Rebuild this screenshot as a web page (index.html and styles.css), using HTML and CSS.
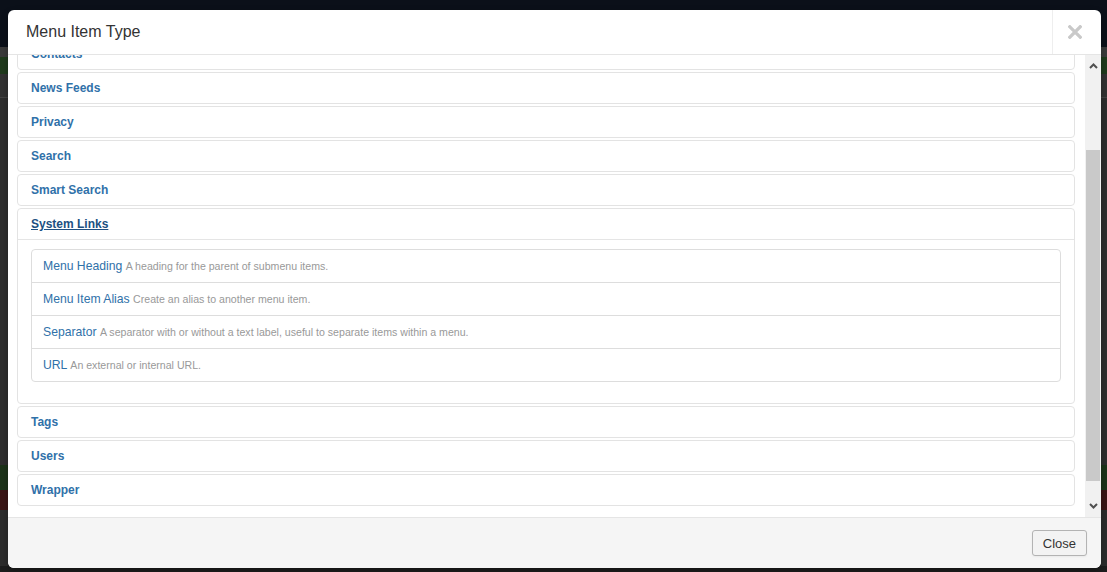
FILE: index.html
```html
<!DOCTYPE html>
<html lang="en">
<head>
  <meta charset="UTF-8">
  <meta name="viewport" content="width=device-width, initial-scale=1.0">
  <title>Menu Item Type</title>
  <link rel="stylesheet" href="styles.css">
  <script src="script.js" defer></script>
</head>
<body>
  <div class="modal">
    <div class="modal-header">
      <h3 class="modal-title">Menu Item Type</h3>
      <button class="close" type="button" aria-label="Close">
        <svg width="14" height="14" viewBox="0 0 14 14"><path d="M1.8 1.8 L12.2 12.2 M12.2 1.8 L1.8 12.2" stroke="#c9c9c9" stroke-width="3.3" stroke-linecap="square"/></svg>
      </button>
    </div>

    <div class="modal-body">
      <div class="scroll" id="types-scroll">
        <div class="group"><div class="heading"><a href="#">Articles</a></div></div>
        <div class="group"><div class="heading"><a href="#">Configuration Manager</a></div></div>
        <div class="group"><div class="heading"><a href="#">Contacts</a></div></div>
        <div class="group"><div class="heading"><a href="#">News Feeds</a></div></div>
        <div class="group"><div class="heading"><a href="#">Privacy</a></div></div>
        <div class="group"><div class="heading"><a href="#">Search</a></div></div>
        <div class="group"><div class="heading"><a href="#">Smart Search</a></div></div>
        <div class="group open">
          <div class="heading"><a href="#" class="current">System Links</a></div>
          <div class="inner">
            <ul class="types">
              <li><a href="#">Menu Heading</a> <small>A heading for the parent of submenu items.</small></li>
              <li><a href="#">Menu Item Alias</a> <small>Create an alias to another menu item.</small></li>
              <li><a href="#">Separator</a> <small>A separator with or without a text label, useful to separate items within a menu.</small></li>
              <li><a href="#">URL</a> <small>An external or internal URL.</small></li>
            </ul>
          </div>
        </div>
        <div class="group"><div class="heading"><a href="#">Tags</a></div></div>
        <div class="group"><div class="heading"><a href="#">Users</a></div></div>
        <div class="group"><div class="heading"><a href="#">Wrapper</a></div></div>
      </div>

      <div class="scrollbar">
        <div class="sb-button">
          <svg width="9" height="6" viewBox="0 0 9 6"><polyline points="1,5 4.5,1.5 8,5" fill="none" stroke="#505050" stroke-width="2"/></svg>
        </div>
        <div class="sb-track"><div class="sb-thumb"></div></div>
        <div class="sb-button">
          <svg width="9" height="6" viewBox="0 0 9 6"><polyline points="1,1 4.5,4.5 8,1" fill="none" stroke="#505050" stroke-width="2"/></svg>
        </div>
      </div>
    </div>

    <div class="modal-footer">
      <button class="btn" type="button">Close</button>
    </div>
  </div>
</body>
</html>
```

FILE: styles.css
```css
body {
  margin: 0;
  height: 572px;
  overflow: hidden;
  font-family: "Liberation Sans", Arial, sans-serif;
  background:
    linear-gradient(to bottom, #0b1019 0, #0b1019 47px, #3a3a3a 47px, #3a3a3a 57px,
      #1f3a1c 57px, #1f3a1c 74px, #323232 74px, #323232 97px, #444 97px, #444 98px,
      #2e2e2e 98px, #2e2e2e 465px, #1c3319 465px, #1c3319 490px, #3a1515 490px,
      #3a1515 510px, #2c2c2c 510px, #2c2c2c 566px, #1d1d1d 566px);
}
.modal {
  display: flex;
  flex-direction: column;
  width: 1093px;
  height: 558px;
  margin: 10px 0 0 8px;
  background: #fff;
  border-radius: 6px;
  overflow: hidden;
  box-shadow: 0 3px 7px rgba(0, 0, 0, .3);
}
.modal-header {
  display: flex;
  height: 44px;
  border-bottom: 1px solid #e5e5e5;
}
.modal-title {
  flex: 1;
  margin: 0;
  padding-left: 18px;
  font-size: 16px;
  font-weight: normal;
  line-height: 44px;
  color: #333;
}
.close {
  display: flex;
  align-items: center;
  justify-content: center;
  width: 49px;
  padding: 0 5px 0 0;
  background: none;
  border: 0;
  border-left: 1px solid #eee;
  cursor: pointer;
}
.modal-body {
  display: flex;
  height: 462px;
}
.scroll {
  flex: 1;
  overflow: hidden;
  padding: 10px 10px 10px 9px;
}
.group {
  margin-bottom: 2px;
  border: 1px solid #e3e3e3;
  border-radius: 4px;
}
.heading {
  padding: 6px 13px;
  font-size: 12px;
  font-weight: bold;
  line-height: 18px;
}
.heading a {
  color: #3071a9;
  text-decoration: none;
}
.heading a.current {
  color: #205081;
  text-decoration: underline;
}
.open .heading {
  border-bottom: 1px solid #e5e5e5;
}
.inner {
  padding: 9px 13px;
}
.types {
  margin: 0 0 12px;
  padding: 0;
  list-style: none;
  border: 1px solid #ddd;
  border-radius: 4px;
}
.types li {
  height: 32px;
  padding: 0 11px;
  font-size: 12.2px;
  line-height: 32px;
  white-space: nowrap;
}
.types li + li {
  border-top: 1px solid #ddd;
}
.types a {
  color: #3071a9;
  text-decoration: none;
}
.types small {
  font-size: 10.6px;
  color: #999;
}
.scrollbar {
  display: flex;
  flex-direction: column;
  width: 16px;
  background: #f1f1f1;
}
.sb-button {
  display: flex;
  align-items: center;
  justify-content: center;
  height: 22px;
}
.sb-track {
  flex: 1;
  padding-top: 73px;
}
.sb-thumb {
  height: 331px;
  margin: 0 1px;
  background: #c9c9c9;
}
.modal-footer {
  display: flex;
  justify-content: flex-end;
  flex: 1;
  padding: 12px 14px;
  background: #f5f5f5;
  border-top: 1px solid #e5e5e5;
}
.btn {
  height: 26px;
  padding: 0 10px;
  font-family: inherit;
  font-size: 13px;
  color: #333;
  background: #f3f3f3;
  border: 1px solid #b3b3b3;
  border-radius: 3px;
  box-shadow: 0 1px 2px rgba(0, 0, 0, .05);
}
```

FILE: script.js
```js
// the list is opened already scrolled to the System Links group
document.getElementById('types-scroll').scrollTop = 95;
```
